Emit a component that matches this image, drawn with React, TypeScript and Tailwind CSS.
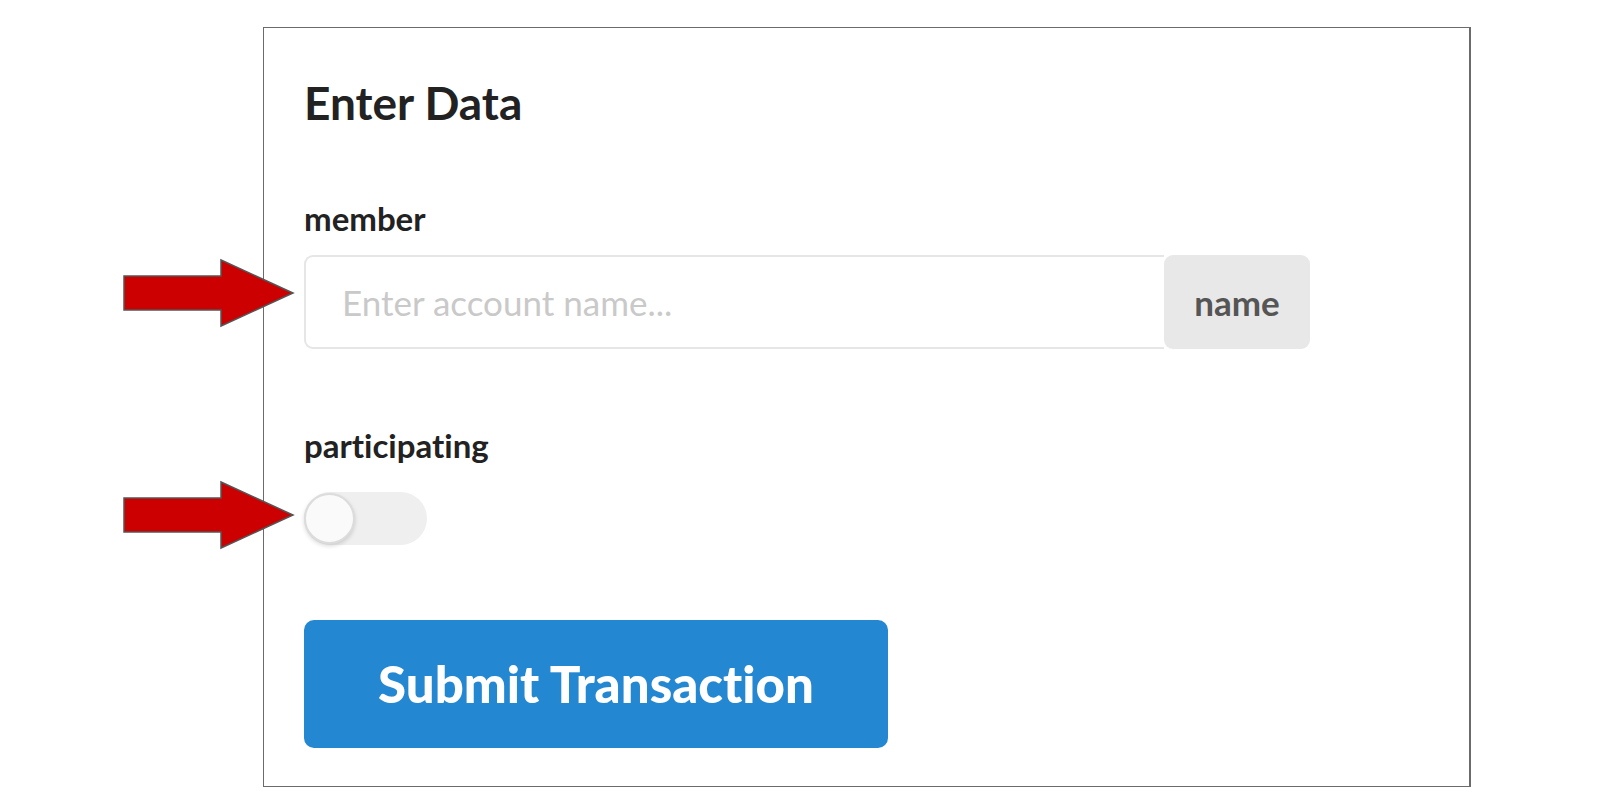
import React from "react";

function Arrow({ className }: { className: string }) {
  return (
    <svg
      className={className}
      width="176"
      height="72"
      viewBox="0 0 176 72"
      xmlns="http://www.w3.org/2000/svg"
    >
      <polygon
        points="1,18 98,18 98,2 170,35 98,68 98,52 1,52"
        fill="#cc0000"
        stroke="#555555"
        strokeWidth="1.5"
        strokeLinejoin="miter"
      />
    </svg>
  );
}

export default function App() {
  return (
    <div
      className="relative w-[1600px] h-[800px] bg-white [font-variant-ligatures:none]"
      style={{ fontFamily: "Lato, 'Noto Sans', sans-serif" }}
    >
      <div className="absolute left-[263px] top-[27px] w-[1208px] h-[760px] border border-[#6b6b6b] border-r-2 bg-white">
        <div className="flex flex-col pl-[40px] pt-[52px]">
          <h1 className="text-[46px] leading-[1] font-bold text-[#222222]">Enter Data</h1>
          <label className="mt-[76px] text-[33px] leading-[1] font-bold text-[#222222]">member</label>
          <div className="mt-[20px] flex w-[1006px] h-[94px]">
            <div className="flex-1 flex items-center border-2 border-[#e6e6e6] border-r-0 rounded-l-[9px] pl-[36px]">
              <span className="text-[35px] text-[#c9c9c9]">Enter account name...</span>
            </div>
            <div className="w-[146px] flex items-center justify-center bg-[#e8e8e8] rounded-[9px] text-[35px] font-bold text-[#555555]">
              name
            </div>
          </div>
          <label className="mt-[80px] text-[33px] leading-[1] font-bold text-[#222222]">participating</label>
          <div className="mt-[30px] relative w-[123px] h-[53px] rounded-full bg-[#efefef]">
            <div className="absolute left-0 top-[1px] w-[51px] h-[51px] rounded-full bg-[#fafafa] border-2 border-[#dcdcdc] shadow-[0_2px_4px_rgba(0,0,0,0.15)]" />
          </div>
          <button className="mt-[75px] w-[584px] h-[128px] rounded-[10px] bg-[#2387d1] text-white text-[51px] font-black">
            Submit Transaction
          </button>
        </div>
      </div>
      <Arrow className="absolute left-[123px] top-[258px]" />
      <Arrow className="absolute left-[123px] top-[480px]" />
    </div>
  );
}
